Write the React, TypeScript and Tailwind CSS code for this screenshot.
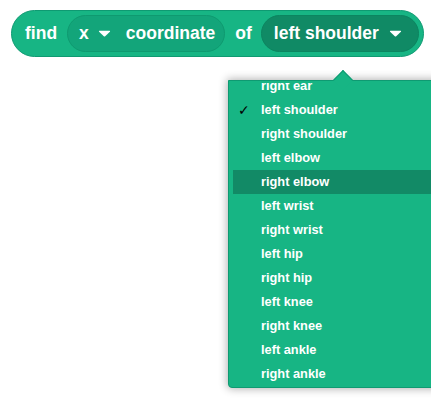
import React from "react";

const Caret = () => (
  <svg width="13" height="7" viewBox="0 0 13 7" className="shrink-0">
    <path d="M1.5 0.8 L11.5 0.8 Q12.6 0.8 11.9 1.7 L7.2 6.2 Q6.5 6.8 5.8 6.2 L1.1 1.7 Q0.4 0.8 1.5 0.8 Z" fill="#ffffff" />
  </svg>
);

const items = [
  "right ear",
  "left shoulder",
  "right shoulder",
  "left elbow",
  "right elbow",
  "left wrist",
  "right wrist",
  "left hip",
  "right hip",
  "left knee",
  "right knee",
  "left ankle",
  "right ankle",
];

export default function App() {
  return (
    <div
      className="relative w-[431px] h-[400px] overflow-hidden bg-white"
      style={{ fontFamily: '"Liberation Sans", Arial, sans-serif' }}
    >
      <div className="pl-[11px] pt-[10px] flex">
        <div className="flex items-center h-[47px] rounded-full border border-[#0f9a72] bg-[#17b584] pl-[13px] pr-[4px] text-white font-bold text-[17.5px]">
          <span>find</span>
          <div className="ml-[10px] flex items-center h-[37px] rounded-full border border-[#0f9a70] bg-[#13a57a] pl-[11px] pr-[9px]">
            <span>x</span>
            <span className="ml-[9px] flex"><Caret /></span>
            <span className="ml-[15px]">coordinate</span>
          </div>
          <span className="ml-[10px]">of</span>
          <div className="ml-[9px] flex items-center h-[37px] rounded-full border border-[#0c8560] bg-[#108a65] pl-[12px] pr-[16px]">
            <span>left shoulder</span>
            <span className="ml-[10px] flex"><Caret /></span>
          </div>
        </div>
      </div>

      <div className="absolute left-[228px] top-[80px] w-[230px] h-[308px] rounded-bl-[4px] border border-[#0f9a72] bg-[#17b584] shadow-[0_0_8px_1px_rgba(0,0,0,0.3)] overflow-hidden">
        <div className="mt-[2px] h-[303px] overflow-hidden">
          <div className="mt-[-9px] pl-[4px] flex flex-col text-white font-bold text-[12.8px]">
            {items.map((it) => (
              <div
                key={it}
                className={`flex items-center h-[24px] ${it === "right elbow" ? "bg-[#128a66]" : ""}`}
              >
                <span className="w-[28px] pl-[5px] text-black font-normal text-[14px]" style={{ fontFamily: '"DejaVu Sans", sans-serif' }}>
                  {it === "left shoulder" ? "✓" : ""}
                </span>
                <span>{it}</span>
              </div>
            ))}
          </div>
        </div>
      </div>
      <div className="absolute left-[336px] top-[73px] w-[14px] h-[14px] rotate-45 bg-[#17b584] border-l border-t border-[#0f9a72]" />
    </div>
  );
}
